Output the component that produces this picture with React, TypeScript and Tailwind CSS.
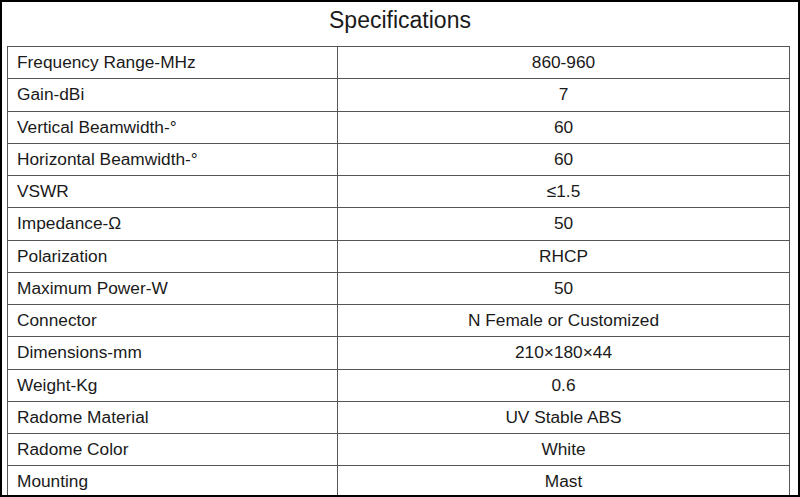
import React from "react";

const rows: [string, string][] = [
  ["Frequency Range-MHz", "860-960"],
  ["Gain-dBi", "7"],
  ["Vertical Beamwidth-°", "60"],
  ["Horizontal Beamwidth-°", "60"],
  ["VSWR", "≤1.5"],
  ["Impedance-Ω", "50"],
  ["Polarization", "RHCP"],
  ["Maximum Power-W", "50"],
  ["Connector", "N Female or Customized"],
  ["Dimensions-mm", "210×180×44"],
  ["Weight-Kg", "0.6"],
  ["Radome Material", "UV Stable ABS"],
  ["Radome Color", "White"],
  ["Mounting", "Mast"],
];

export default function App() {
  return (
    <div
      className="w-[800px] h-[497px] border-2 border-black bg-white overflow-hidden flex flex-col text-[#1a1a1a]"
      style={{ fontFamily: '"Liberation Sans", Arial, sans-serif' }}
    >
      <div className="h-[44px] shrink-0 flex items-center justify-center text-[23px] pb-[7px]">
        Specifications
      </div>
      <div className="ml-[5px] mr-[8px] border-l border-r border-[#555] flex flex-col">
        {rows.map(([k, v]) => (
          <div
            key={k}
            className="h-[32.25px] shrink-0 flex border-t border-[#555] text-[17.3px]"
          >
            <div className="w-[330px] shrink-0 border-r border-[#555] flex items-center pl-[9px] pt-[1px]">
              {k}
            </div>
            <div className="flex-1 flex items-center justify-center pt-[1px]">{v}</div>
          </div>
        ))}
      </div>
    </div>
  );
}
